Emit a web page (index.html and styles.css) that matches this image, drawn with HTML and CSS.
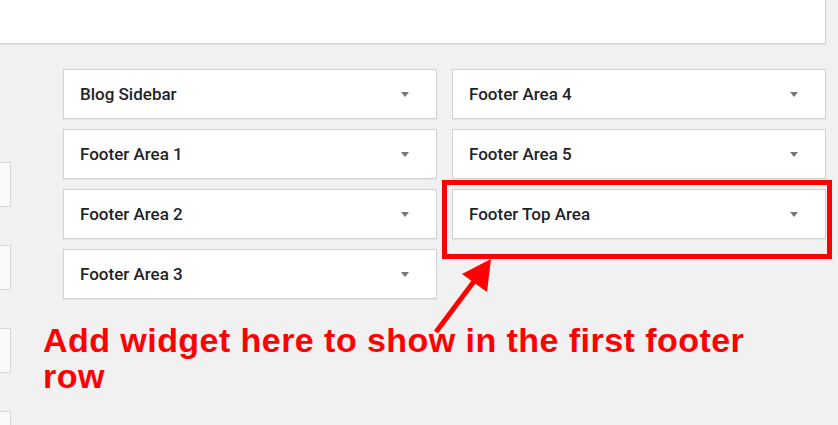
FILE: index.html
```html
<!DOCTYPE html>
<html lang="en">
  <head>
    <meta charset="UTF-8" />
    <meta name="viewport" content="width=device-width, initial-scale=1.0" />
    <title>Widgets</title>
    <link rel="stylesheet" href="styles.css">
  </head>
  <body>
    <div class="top-panel"></div>

    <div class="main">
      <div class="available">
        <div class="stub"></div>
        <div class="stub"></div>
        <div class="stub"></div>
        <div class="stub"></div>
      </div>

      <div class="areas">
        <div class="sidebars">
          <div class="sidebar-col">
            <div class="widget"><h2>Blog Sidebar</h2><span class="toggle"></span></div>
            <div class="widget"><h2>Footer Area 1</h2><span class="toggle"></span></div>
            <div class="widget"><h2>Footer Area 2</h2><span class="toggle"></span></div>
            <div class="widget"><h2>Footer Area 3</h2><span class="toggle"></span></div>
          </div>
          <div class="sidebar-col">
            <div class="widget"><h2>Footer Area 4</h2><span class="toggle"></span></div>
            <div class="widget"><h2>Footer Area 5</h2><span class="toggle"></span></div>
            <div class="widget highlighted"><h2>Footer Top Area</h2><span class="toggle"></span></div>
          </div>
        </div>

        <p class="callout">Add widget here to show in the first footer row</p>
      </div>
    </div>

    <svg class="arrow" width="838" height="425" viewBox="0 0 838 425">
      <line x1="436" y1="332" x2="478" y2="276" stroke="#ff0000" stroke-width="5" />
      <polygon points="491,259 462,274 487,292" fill="#ff0000" />
    </svg>
  </body>
</html>
```

FILE: styles.css
```css
* {
  box-sizing: border-box;
}
body {
  margin: 0;
  background-color: #f1f1f1;
  font-family: Roboto, "Liberation Sans", sans-serif;
  overflow: hidden;
  height: 425px;
}
.top-panel {
  width: 826px;
  height: 44px;
  background: #ffffff;
  border-right: 1px solid #cfcfcf;
  border-bottom: 1px solid #cfcfcf;
  box-shadow: 0 1px 1px rgba(0, 0, 0, 0.05);
}
.main {
  display: flex;
}
.available {
  width: 11px;
  padding-top: 118px;
}
.stub {
  height: 45px;
  margin-bottom: 38px;
  background: #fafafa;
  border: 1px solid #d6d6d6;
  border-left: none;
}
.areas {
  flex: 1;
}
.sidebars {
  display: flex;
  gap: 15px;
  margin: 25px 0 0 52px;
}
.sidebar-col {
  width: 374px;
  display: flex;
  flex-direction: column;
  gap: 10px;
}
.widget {
  position: relative;
  height: 50px;
  display: flex;
  align-items: center;
  justify-content: space-between;
  padding: 0 27px 0 16px;
  background: #ffffff;
  border: 1px solid #cfd1d4;
  box-shadow: 0 1px 1px rgba(0, 0, 0, 0.04);
}
.widget h2 {
  margin: 0;
  font-size: 17px;
  font-weight: 500;
  color: #1e2327;
}
.toggle {
  width: 0;
  height: 0;
  border-left: 4px solid transparent;
  border-right: 4px solid transparent;
  border-top: 5px solid #72777c;
}
.highlighted::after {
  content: "";
  position: absolute;
  left: -11px;
  top: -10px;
  right: -7px;
  bottom: -21px;
  border: 5px solid #ff0000;
}
.callout {
  width: 760px;
  margin: 23px 0 0 32px;
  font-family: "Liberation Sans", Arial, sans-serif;
  font-size: 34px;
  font-weight: bold;
  letter-spacing: 0.45px;
  line-height: 36px;
  color: #ff0000;
}
.arrow {
  position: absolute;
  left: 0;
  top: 0;
  pointer-events: none;
}
```
